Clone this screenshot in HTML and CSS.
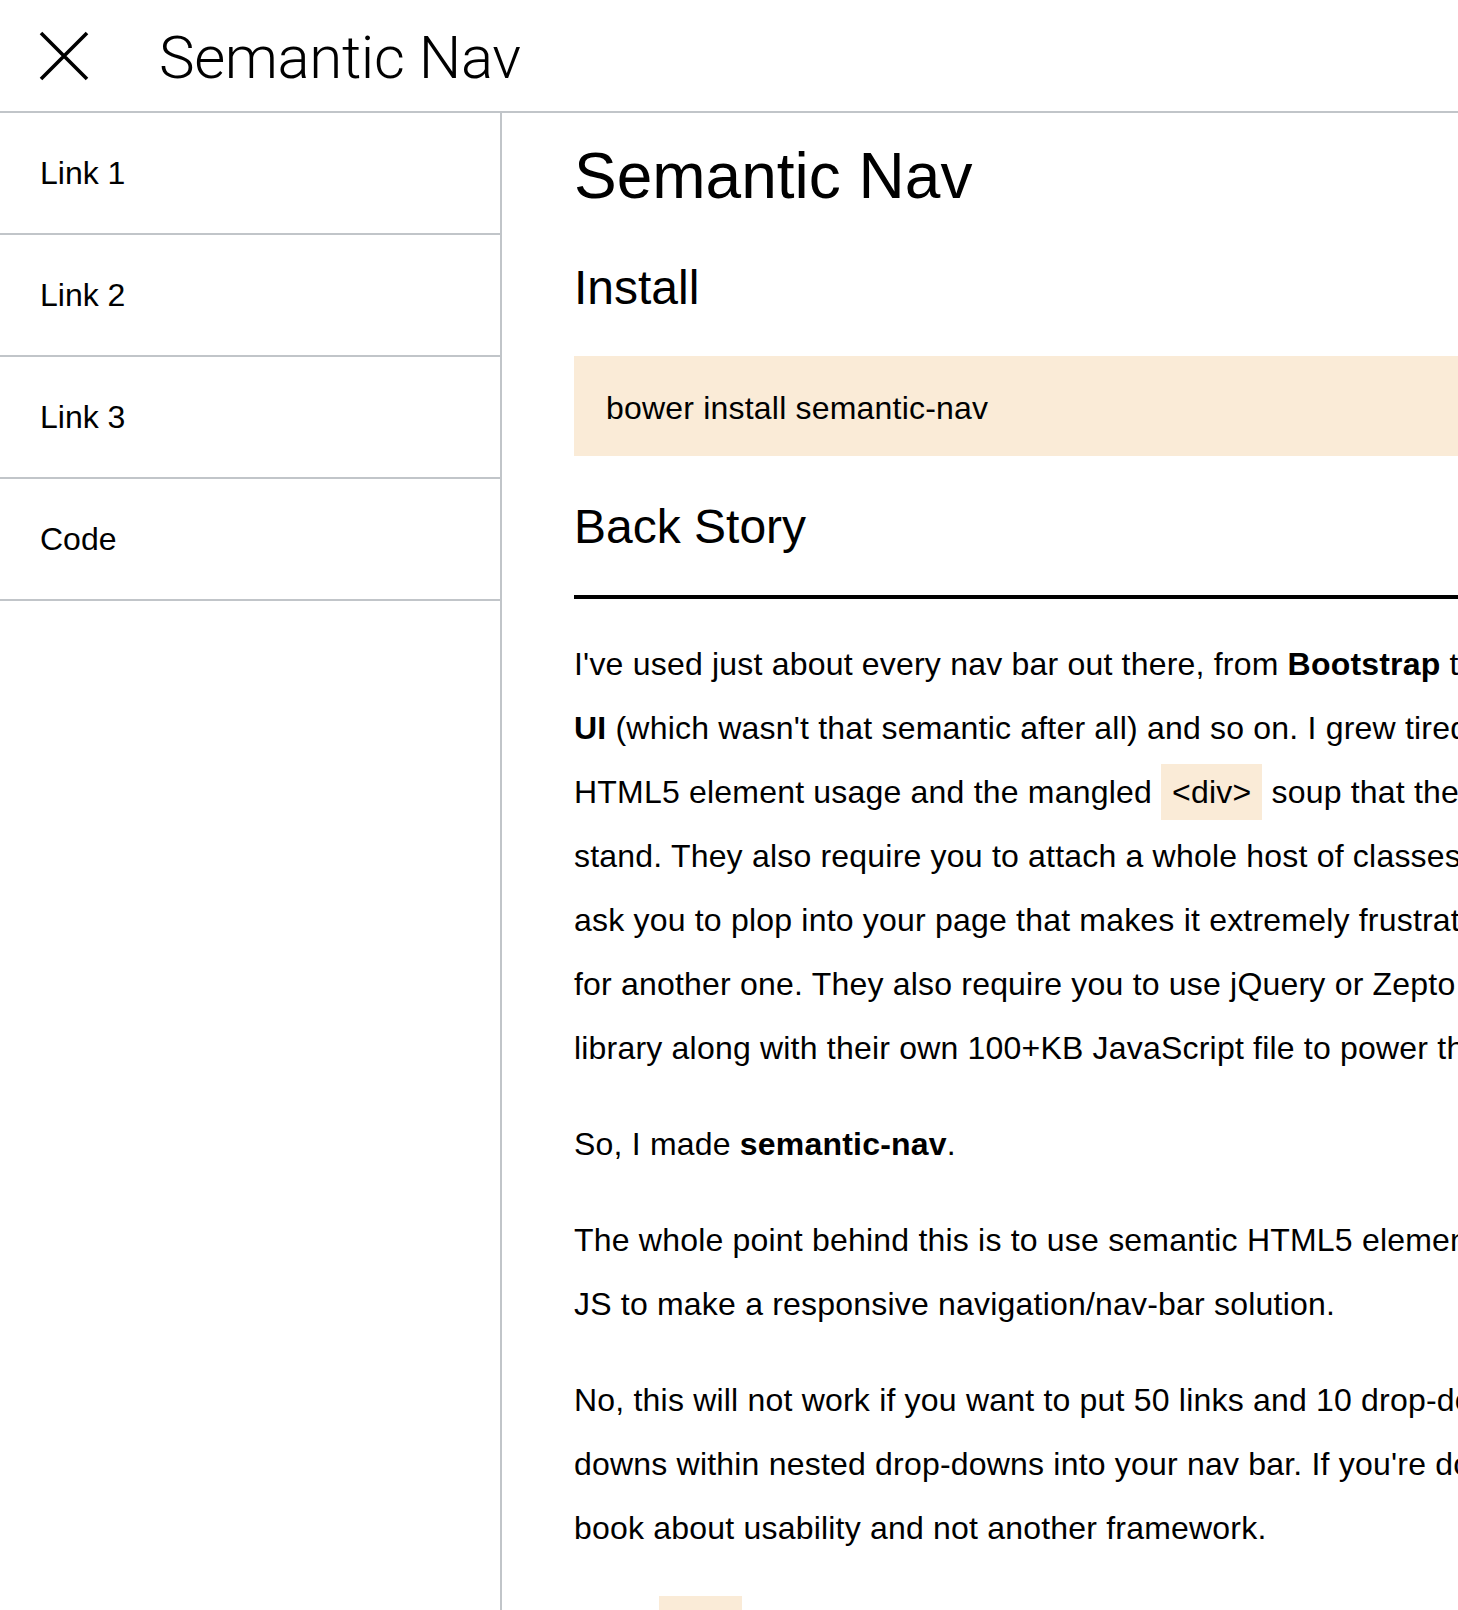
FILE: index.html
```html
<!DOCTYPE html>
<html lang="en">
<head>
<meta charset="utf-8">
<title>Semantic Nav</title>
<link rel="stylesheet" href="styles.css">
</head>
<body>
<header class="topbar">
  <button class="close-btn" aria-label="Close menu">
    <svg viewBox="0 0 50 50" width="50" height="50" aria-hidden="true">
      <path d="M2 2 L48 48 M48 2 L2 48" stroke="#000" stroke-width="3.6" fill="none"/>
    </svg>
  </button>
  <span class="brand">Semantic Nav</span>
</header>
<div class="layout">
  <nav class="sidebar">
    <ul class="nav-list">
      <li><a class="nav-link" href="#">Link 1</a></li>
      <li><a class="nav-link" href="#">Link 2</a></li>
      <li><a class="nav-link" href="#">Link 3</a></li>
      <li><a class="nav-link" href="#">Code</a></li>
    </ul>
  </nav>
  <main class="content">
    <h1 class="page-title">Semantic Nav</h1>
    <h2 class="section-title install-title">Install</h2>
    <pre class="code-block">bower install semantic-nav</pre>
    <h2 class="section-title story-title">Back Story</h2>
    <hr class="rule">
    <p class="para">I've used just about every nav bar out there, from <strong>Bootstrap</strong> to Foundation to Semantic<br><strong>UI</strong> (which wasn't that semantic after all) and so on. I grew tired of the lack of proper<br>HTML5 element usage and the mangled <code class="inline-code">&lt;div&gt;</code> soup that they create which is hard to under-<br>stand. They also require you to attach a whole host of classes to the markup they<br>ask you to plop into your page that makes it extremely frustrating to swap one out<br>for another one. They also require you to use jQuery or Zepto or some other<br>library along with their own 100+KB JavaScript file to power their nav bars.</p>
    <p class="para">So, I made <strong>semantic-nav</strong>.</p>
    <p class="para">The whole point behind this is to use semantic HTML5 elements, CSS, and minimal<br>JS to make a responsive navigation/nav-bar solution.</p>
    <p class="para">No, this will not work if you want to put 50 links and 10 drop-downs with nested drop-<br>downs within nested drop-downs into your nav bar. If you're doing that, you need to read a<br>book about usability and not another framework.</p>
    <p class="para">Copy <code class="inline-code">html</code> markup from the demo below into your page.</p>
  </main>
</div>
</body>
</html>
```

FILE: styles.css
```css
* {
  box-sizing: border-box;
}

html,
body {
  margin: 0;
  height: 100%;
  overflow: hidden;
}

body {
  font-family: "Liberation Sans", Arial, sans-serif;
  font-size: 32px;
  color: #000;
  background: #fff;
}

.topbar {
  height: 113px;
  display: flex;
  align-items: center;
  gap: 70px;
  padding: 0 0 0 39px;
  border-bottom: 2px solid #c1c5c9;
}

.close-btn {
  display: block;
  width: 50px;
  height: 50px;
  padding: 0;
  border: 0;
  background: none;
  cursor: pointer;
}

.close-btn svg {
  display: block;
}

.brand {
  font-family: Roboto, "Liberation Sans", sans-serif;
  font-weight: 300;
  font-size: 60px;
  letter-spacing: -0.4px;
  line-height: 60px;
  padding-top: 5px;
}

.layout {
  display: flex;
  height: calc(100% - 113px);
}

.sidebar {
  width: 502px;
  flex: none;
  border-right: 2px solid #c1c5c9;
}

.nav-list {
  list-style: none;
  margin: 0;
  padding: 0;
}

.nav-link {
  display: block;
  padding: 42px 40px 41px;
  line-height: 37px;
  color: #000;
  text-decoration: none;
  border-bottom: 2px solid #c1c5c9;
}

.content {
  flex: 1;
  min-width: 0;
  overflow: hidden;
  padding: 25px 0 0 72px;
}

.page-title {
  margin: 0;
  font-size: 64px;
  font-weight: 400;
  line-height: 76.8px;
}

.section-title {
  font-size: 48px;
  font-weight: 400;
  line-height: 57.6px;
}

.install-title {
  margin: 44px 0 40px;
}

.story-title {
  margin: 42px 0 39px;
}

.code-block {
  margin: 0;
  padding: 34px 32px 30px;
  line-height: 36px;
  font-family: inherit;
  font-size: 32px;
  letter-spacing: 0.2px;
  background: #faebd7;
}

.rule {
  margin: 0 0 33px;
  height: 4px;
  border: 0;
  background: #000;
}

.para {
  margin: 0 0 32px;
  line-height: 64px;
  letter-spacing: 0.2px;
  white-space: nowrap;
}

.inline-code {
  font-family: inherit;
  font-size: inherit;
  background: #faebd7;
  padding: 10px 11px;
}
```
